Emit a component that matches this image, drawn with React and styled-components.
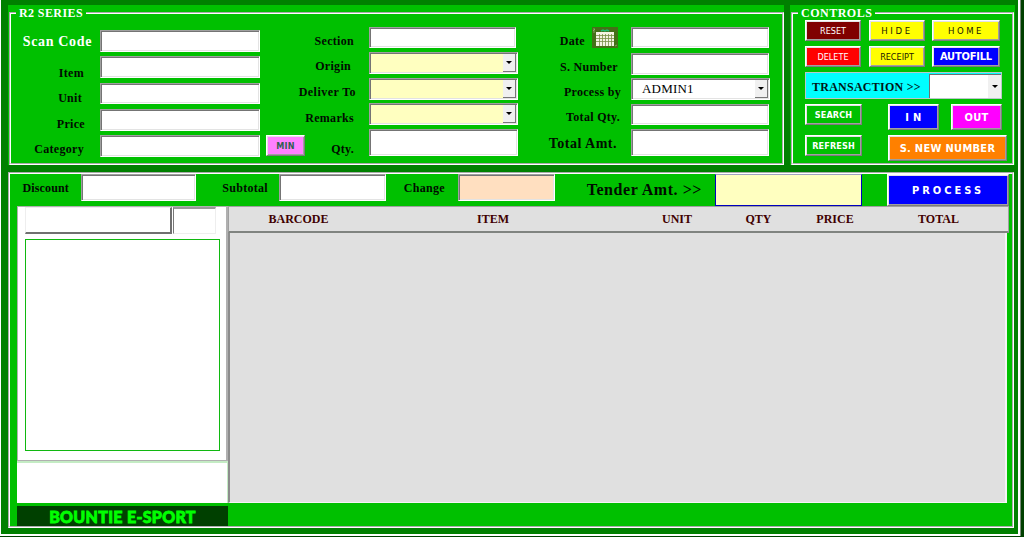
import styled, { createGlobalStyle } from 'styled-components';

const Global = createGlobalStyle`
* { box-sizing: border-box; }
body { margin: 0; background: #004000; overflow: hidden; }
`

const Win = styled.div`
width: 1020px;
height: 536px;
background-color: #008000;
border: solid #fff;
border-width: 0 2px 2px 1px;
outline: 1px solid #7a8a7a;
padding: 5px 0 0 7px;
font-family: 'Liberation Serif', serif;
font-weight: bold;
`

const Top = styled.div`
display: flex;
gap: 6px;
height: 160px;
`

const Panel = styled.div`
width: ${p => p.$w}px;
height: 160px;
background-color: #00c000;
padding: 0 ${p => p.$right || 0}px 0 1px;
`

const Group = styled.fieldset`
height: 160px;
margin: 0;
padding: 0;
min-width: 0;
border: 2px groove #fff;
`

const Legend = styled.legend`
margin-left: ${p => p.$x}px;
padding: 0 3px;
height: 16px;
line-height: 16px;
font-size: 12px;
letter-spacing: ${p => p.$sp}px;
color: #fff;
`

const Columns = styled.div`
display: flex;
`

const Column = styled.div`
width: ${p => p.$w}px;
`

const Row = styled.div`
display: flex;
align-items: flex-start;
height: ${p => p.$h}px;
margin-top: ${p => p.$gap}px;
`

const Label = styled.div`
display: flex;
justify-content: flex-end;
flex: none;
width: ${p => p.$w}px;
padding: ${p => p.$top}px ${p => p.$right}px 0 0;
white-space: nowrap;
line-height: 14px;
font-size: ${p => p.$size || 12}px;
letter-spacing: ${p => p.$sp ?? 0.3}px;
color: ${p => p.$color || '#000c00'};
`

const Input = styled.div`
width: ${p => p.$w}px;
height: ${p => p.$h}px;
padding: 1px;
background-color: ${p => p.$bg || '#fff'};
border: 1px solid;
border-color: #a0a0a0 #fff #fff #a0a0a0;
box-shadow: inset 1px 1px 0 #747474, inset -1px -1px 0 #e3e3e3;
display: flex;
justify-content: flex-end;
flex: none;
`

const Value = styled.div`
flex: 1;
padding-left: 9px;
line-height: 17px;
font-size: 13px;
font-weight: normal;
letter-spacing: 0.2px;
color: #000;
`

const Drop = styled.div`
width: 13px;
background-color: #f0f0f0;
border: solid #777;
border-width: 0 ${p => p.$flat ? 0 : 1}px ${p => p.$flat ? 0 : 1}px 0;
display: flex;
align-items: center;
justify-content: center;
&::after {
   content: '';
   border: solid transparent;
   border-width: 3px 3px 0;
   border-top-color: #000;
}
`

const Button = styled.div`
width: ${p => p.$w}px;
height: ${p => p.$h}px;
margin-left: ${p => p.$ml || 0}px;
background-color: ${p => p.$bg};
color: ${p => p.$color || '#fff'};
border: 1px solid;
border-color: #fff #7c7c7c #7c7c7c #fff;
box-shadow: inset 1px 1px 0 #e3e3e3, inset -1px -1px 0 #a0a0a0;
display: flex;
flex: none;
align-items: center;
justify-content: center;
white-space: nowrap;
font-family: 'DejaVu Sans Condensed', 'DejaVu Sans', sans-serif;
font-stretch: ${p => p.$wide ? 'normal' : 'condensed'};
font-size: ${p => p.$size || 9}px;
font-weight: ${p => p.$bold ? 'bold' : 'normal'};
letter-spacing: ${p => p.$sp || 0}px;
`

const Calendar = styled.svg`
width: 26px;
height: 21px;
margin: 0 13px 0 7px;
flex: none;
`

const Buttons = styled.div`
padding-left: 12px;
margin-top: -1px;
`

const Transaction = styled.div`
display: flex;
width: 197px;
height: 27px;
margin-top: 5px;
background-color: #00ffff;
border: 1px solid #b8c8c8;
`

const TransactionText = styled.div`
width: 123px;
padding-left: 6px;
line-height: 28px;
font-size: 12px;
letter-spacing: 0.25px;
color: #001818;
white-space: nowrap;
`

const Combo = styled.div`
flex: 1;
margin-top: 1px;
background-color: #fff;
border: solid #707070;
border-width: 1px 0 0 1px;
display: flex;
justify-content: flex-end;
`

const Sales = styled.div`
width: 1006px;
height: 356px;
margin-top: 7px;
background-color: #00c000;
border: 2px groove #fff;
`

const Totals = styled.div`
display: flex;
align-items: flex-start;
height: 32px;
`

const Tender = styled.div`
width: 147px;
height: 32px;
background-color: #ffffc0;
border: 1px solid #0000c0;
border-top-color: #a0a0c0;
`

const Body = styled.div`
display: flex;
padding-left: 7px;
`

const Side = styled.div`
width: 211px;
flex: none;
`

const Card = styled.div`
height: 255px;
background-color: #fff;
border: solid #b0b0b0;
border-width: 1px 2px 1px 1px;
padding: 0 0 0 7px;
`

const Tabs = styled.div`
display: flex;
gap: 1px;
height: 27px;
`

const Raised = styled.div`
width: 147px;
border: solid #707070;
border-width: 1px 2px 2px 1px;
border-top-color: #eee;
border-left-color: #eee;
`

const Sunken = styled.div`
width: 43px;
border: solid #eee;
border-width: 2px 1px 1px 1px;
border-top-color: #999;
border-left-color: #777;
`

const List = styled.div`
width: 195px;
height: 212px;
margin-top: 5px;
border: 1px solid #10b810;
`

const Note = styled.div`
height: 42px;
background-color: #fff;
border: solid #c4ecc4;
border-width: 2px 1px 0 0;
`

const Logo = styled.div`
height: 20px;
margin-top: 3px;
background-color: #004000;
text-align: center;
white-space: nowrap;
line-height: 21px;
font-family: Lato, sans-serif;
font-weight: 900;
font-size: 16px;
letter-spacing: 0.3px;
color: #00ff00;
-webkit-text-stroke: 0.8px #00ff00;
`

const Table = styled.div`
width: 781px;
flex: none;
`

const Head = styled.div`
display: flex;
height: 27px;
line-height: 25px;
background-color: #e0e0e0;
border: 1px solid #a0a0a0;
border-bottom: 2px solid #808480;
font-size: 12px;
color: #400000;
`

const Cell = styled.div`
width: ${p => p.$w}px;
text-align: center;
`

const Grid = styled.div`
width: 779px;
height: 270px;
background-color: #e0e0e0;
border: solid #f4f4f4;
border-width: 0 2px 1px 2px;
border-left-color: #8c8c8c;
`

export default function App() {
   return (
      <>
         <Global />
         <Win>
            <Top>
               <Panel $w={776}>
                  <Group>
                     <Legend $x={5} $sp={0.4}>R2 SERIES</Legend>
                     <Columns>
                        <Column $w={294}>
                           <Row $h={22} $gap={9}><Label $w={89} $top={5} $right={8} $size={14} $sp={0.65} $color="#fff">Scan Code</Label><Input $w={160} $h={22} /></Row>
                           <Row $h={22} $gap={4}><Label $w={89} $top={10} $right={16}>Item</Label><Input $w={160} $h={22} /></Row>
                           <Row $h={22} $gap={5}><Label $w={89} $top={8} $right={18}>Unit</Label><Input $w={160} $h={21} /></Row>
                           <Row $h={22} $gap={4}><Label $w={89} $top={8} $right={15}>Price</Label><Input $w={160} $h={22} /></Row>
                           <Row $h={22} $gap={4}>
                              <Label $w={89} $top={7} $right={16}>Category</Label>
                              <Input $w={160} $h={22} />
                              <Button $w={39} $h={21} $ml={6} $bg="#ff80ff" $color="#306050" $sp={0.3} $bold>MIN</Button>
                           </Row>
                        </Column>
                        <Column $w={213}>
                           <Row $h={21} $gap={6}><Label $w={64} $top={7} $right={15}>Section</Label><Input $w={147} $h={21} /></Row>
                           <Row $h={22} $gap={4}><Label $w={64} $top={7} $right={18}>Origin</Label><Input $w={149} $h={22} $bg="#ffffc0"><Drop /></Input></Row>
                           <Row $h={22} $gap={4}><Label $w={64} $top={7} $right={13} $sp={0.45}>Deliver To</Label><Input $w={149} $h={22} $bg="#ffffc0"><Drop /></Input></Row>
                           <Row $h={22} $gap={3}><Label $w={64} $top={8} $right={15}>Remarks</Label><Input $w={149} $h={22} $bg="#ffffc0"><Drop /></Input></Row>
                           <Row $h={27} $gap={4}><Label $w={64} $top={13} $right={15}>Qty.</Label><Input $w={149} $h={27} /></Row>
                        </Column>
                        <Column $w={252}>
                           <Row $h={21} $gap={6}>
                              <Label $w={67} $top={7} $right={0}>Date</Label>
                              <Calendar viewBox="0 0 26 21">
                                 <rect width="26" height="21" fill="#447018" />
                                 <path d="M9 4l2-1 2 1 2-1 2 1" stroke="#20b870" strokeWidth="1.5" fill="none" />
                                 <rect x="4" y="5" width="18" height="14" fill="#f4f4e4" />
                                 <path d="M4 8.5h18M4 11.5h18M4 14.5h18M7.5 7v12M10.5 7v12M13.5 7v12M16.5 7v12M19.5 7v12" stroke="#789048" strokeWidth="0.8" />
                                 <path d="M1 4l2-2M2 1v5M23 19l2-1" stroke="#a0b880" strokeWidth="0.7" />
                              </Calendar>
                              <Input $w={138} $h={21} />
                           </Row>
                           <Row $h={22} $gap={5}><Label $w={113} $top={7} $right={13}>S. Number</Label><Input $w={138} $h={22} /></Row>
                           <Row $h={22} $gap={3}><Label $w={113} $top={7} $right={10}>Process by</Label><Input $w={139} $h={22}><Value>ADMIN1</Value><Drop /></Input></Row>
                           <Row $h={21} $gap={4}><Label $w={113} $top={6} $right={11}>Total Qty.</Label><Input $w={138} $h={21} /></Row>
                           <Row $h={27} $gap={4}><Label $w={113} $top={8} $right={14} $size={14} $sp={0.5}>Total Amt.</Label><Input $w={138} $h={27} /></Row>
                        </Column>
                     </Columns>
                  </Group>
               </Panel>
               <Panel $w={225} $right={1}>
                  <Group>
                     <Legend $x={5} $sp={0.5}>CONTROLS</Legend>
                     <Buttons>
                        <Row $h={21} $gap={0}>
                           <Button $w={56} $h={21} $bg="#800000">RESET</Button>
                           <Button $w={56} $h={21} $ml={8} $bg="#ffff00" $color="#202000" $size={9.5} $sp={2.7}>HIDE</Button>
                           <Button $w={68} $h={21} $ml={7} $bg="#ffff00" $color="#202000" $size={9.5} $sp={2.5}>HOME</Button>
                        </Row>
                        <Row $h={21} $gap={5}>
                           <Button $w={56} $h={21} $bg="#ff0000">DELETE</Button>
                           <Button $w={56} $h={21} $ml={8} $bg="#ffff00" $color="#202000">RECEIPT</Button>
                           <Button $w={68} $h={21} $ml={7} $bg="#0000ff" $size={11} $sp={-0.2} $bold>AUTOFILL</Button>
                        </Row>
                        <Transaction>
                           <TransactionText>TRANSACTION &gt;&gt;</TransactionText>
                           <Combo><Drop $flat /></Combo>
                        </Transaction>
                        <Row $h={26} $gap={5}>
                           <Button $w={57} $h={21} $bg="#00c000" $sp={0.15} $bold>SEARCH</Button>
                           <Button $w={51} $h={26} $ml={26} $bg="#0000ff" $size={11} $sp={0.3} $bold>I N</Button>
                           <Button $w={51} $h={26} $ml={12} $bg="#ff00ff" $size={11} $sp={0.3} $bold>OUT</Button>
                        </Row>
                        <Row $h={26} $gap={5}>
                           <Button $w={57} $h={21} $bg="#00c000" $sp={0.15} $bold>REFRESH</Button>
                           <Button $w={119} $h={26} $ml={26} $bg="#ff8000" $size={11} $sp={0.3} $bold>S. NEW NUMBER</Button>
                        </Row>
                     </Buttons>
                  </Group>
               </Panel>
            </Top>
            <Sales>
               <Totals>
                  <Label $w={71} $top={7} $right={12} $sp={0.15}>Discount</Label>
                  <Input $w={115} $h={27} />
                  <Label $w={83} $top={7} $right={11}>Subtotal</Label>
                  <Input $w={107} $h={27} />
                  <Label $w={72} $top={7} $right={13}>Change</Label>
                  <Input $w={97} $h={27} $bg="#ffdfc0" />
                  <Label $w={160} $top={9} $right={13} $size={16} $sp={0.55}>Tender Amt. &gt;&gt;</Label>
                  <Tender />
                  <Button $w={122} $h={32} $ml={25} $bg="#0000ff" $size={11} $sp={3} $bold>PROCESS</Button>
               </Totals>
               <Body>
                  <Side>
                     <Card>
                        <Tabs><Raised /><Sunken /></Tabs>
                        <List />
                     </Card>
                     <Note />
                     <Logo>BOUNTIE E-SPORT</Logo>
                  </Side>
                  <Table>
                     <Head>
                        <Cell $w={139}>BARCODE</Cell>
                        <Cell $w={250}>ITEM</Cell>
                        <Cell $w={118}>UNIT</Cell>
                        <Cell $w={45}>QTY</Cell>
                        <Cell $w={108}>PRICE</Cell>
                        <Cell $w={99}>TOTAL</Cell>
                     </Head>
                     <Grid />
                  </Table>
               </Body>
            </Sales>
         </Win>
      </>
   );
}
